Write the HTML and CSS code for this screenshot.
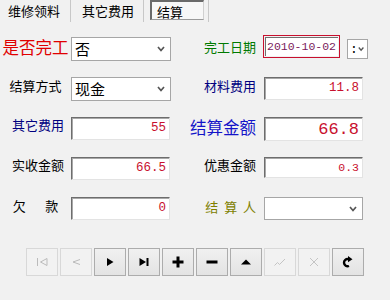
FILE: index.html
```html
<!DOCTYPE html>
<html lang="zh-CN">
<head>
    <meta charset="UTF-8">
    <title>结算</title>
    <link rel="stylesheet" href="styles.css">
</head>
<body>
    <div class="tabs">
        <div class="tab tab-first">维修领料</div>
        <div class="tab tab-second">其它费用</div>
        <div class="tab tab-active"><span class="tab-box">结算</span></div>
    </div>

    <div class="form">
        <!-- 第一行 -->
        <div class="lbl lbl-big red">是否完工</div>
        <div class="combo combo-left"><span class="combo-text">否</span>
            <svg class="chev" width="8" height="6" viewBox="0 0 8 6"><path d="M1 1 L4 4.5 L7 1" fill="none" stroke="#555" stroke-width="1.7"/></svg>
        </div>
        <div class="lbl lbl-right green lbl-low">完工日期</div>
        <div class="date-cell">
            <div class="date-box"><div class="date-inner">2010-10-02</div></div>
            <div class="spin"><span>:</span>
                <svg class="chev" width="8" height="6" viewBox="0 0 8 6"><path d="M1 1 L4 4.5 L7 1" fill="none" stroke="#555" stroke-width="1.7"/></svg>
            </div>
        </div>

        <!-- 第二行 -->
        <div class="lbl lbl-mid">结算方式</div>
        <div class="combo combo-left"><span class="combo-text">现金</span>
            <svg class="chev" width="8" height="6" viewBox="0 0 8 6"><path d="M1 1 L4 4.5 L7 1" fill="none" stroke="#555" stroke-width="1.7"/></svg>
        </div>
        <div class="lbl lbl-right navy lbl-mid">材料费用</div>
        <div class="field">11.8</div>

        <!-- 第三行 -->
        <div class="lbl lbl-shift navy">其它费用</div>
        <div class="field">55</div>
        <div class="lbl lbl-right lbl-big blue">结算金额</div>
        <div class="field field-big">66.8</div>

        <!-- 第四行 -->
        <div class="lbl lbl-shift">实收金额</div>
        <div class="field">66.5</div>
        <div class="lbl lbl-right">优惠金额</div>
        <div class="field field-small">0.3</div>

        <!-- 第五行 -->
        <div class="lbl lbl-spaced">欠&emsp;&ensp;款</div>
        <div class="field">0</div>
        <div class="lbl lbl-right olive lbl-low">结&nbsp;&nbsp;算&nbsp;&nbsp;人</div>
        <div class="combo combo-right">
            <svg class="chev" width="8" height="6" viewBox="0 0 8 6"><path d="M1 1 L4 4.5 L7 1" fill="none" stroke="#555" stroke-width="1.7"/></svg>
        </div>
    </div>

    <div class="toolbar">
        <div class="btn off"><svg width="16" height="16" viewBox="0 0 16 16"><path d="M3.5 4 V12" stroke="#bbb"/><path d="M13 4.5 L6.5 8 L13 11.5 Z" fill="none" stroke="#bbb"/></svg></div>
        <div class="btn off"><svg width="16" height="16" viewBox="0 0 16 16"><path d="M12 5.5 L5 8 L12 10.5" fill="none" stroke="#bbb"/></svg></div>
        <div class="btn"><svg width="16" height="16" viewBox="0 0 16 16"><path d="M5 4 L11.5 8 L5 12 Z" fill="#000"/></svg></div>
        <div class="btn"><svg width="16" height="16" viewBox="0 0 16 16"><path d="M3.5 4 L10 8 L3.5 12 Z" fill="#000"/><rect x="10.5" y="4" width="2" height="8" fill="#000"/></svg></div>
        <div class="btn"><svg width="16" height="16" viewBox="0 0 16 16"><rect x="2.5" y="6.5" width="11" height="3" fill="#000"/><rect x="6.5" y="2.5" width="3" height="11" fill="#000"/></svg></div>
        <div class="btn"><svg width="16" height="16" viewBox="0 0 16 16"><rect x="2.5" y="6.5" width="11" height="3" fill="#000"/></svg></div>
        <div class="btn"><svg width="16" height="16" viewBox="0 0 16 16"><path d="M3 10.5 L13 10.5 L8 5.5 Z" fill="#000"/></svg></div>
        <div class="btn off"><svg width="16" height="16" viewBox="0 0 16 16"><path d="M2.5 11.5 L5.5 8.5 L7.5 10.5 L13 5" fill="none" stroke="#c4c4c4"/></svg></div>
        <div class="btn off"><svg width="16" height="16" viewBox="0 0 16 16"><path d="M4 4 L12 12 M12 4 L4 12" fill="none" stroke="#c4c4c4"/></svg></div>
        <div class="btn"><svg width="16" height="16" viewBox="0 0 16 16"><path d="M9 12 A3.6 3.6 0 1 1 8.5 5.2" fill="none" stroke="#000" stroke-width="2.4"/><path d="M8 2 L12.5 5.3 L8 8.3 Z" fill="#000"/></svg></div>
    </div>
</body>
</html>
```

FILE: styles.css
```css
body {
    margin: 0;
    width: 390px;
    height: 300px;
    overflow: hidden;
    background-color: #f1f1f1;
    font-family: "Noto Sans CJK SC", "Liberation Sans", sans-serif;
    font-size: 13px;
    color: #000;
}

/* Pestañas */
.tabs {
    display: flex;
    height: 22px;
}

.tab {
    box-sizing: border-box;
    height: 22px;
    line-height: 16px;
    padding-top: 3px;
    border-right: 1px solid #c8c8c8;
}

.tab-first {
    width: 71px;
    padding-left: 8px;
}

.tab-second {
    width: 73px;
    padding-left: 11px;
}

.tab-active {
    width: 65px;
    padding: 0 0 0 6px;
}

.tab-box {
    display: block;
    box-sizing: border-box;
    width: 54px;
    height: 20px;
    padding: 2px 0 0 5px;
    line-height: 16px;
    background-color: #f7f7f7;
    border: 1px solid;
    border-width: 2px 1px 1px 2px;
    border-color: #6a6a6a #d0d0d0 #9a9a9a #6a6a6a;
}

/* Formulario */
.form {
    display: grid;
    grid-template-columns: 71px 100px 93px 104px;
    grid-auto-rows: 24px;
    row-gap: 16px;
    padding-top: 15px;
}

.lbl {
    line-height: 16px;
    text-align: center;
    white-space: nowrap;
}

.lbl-shift {
    padding-left: 5px;
}

.lbl-right {
    text-align: right;
    padding-right: 8px;
    padding-left: 0;
}

.lbl-low {
    padding-top: 2px;
}

.lbl-mid {
    padding-top: 1px;
}

.lbl-big {
    font-size: 16.5px;
    line-height: 20px;
}

.lbl-spaced {
    padding-top: 1px;
}

.red { color: #e00000; }
.green { color: #007a00; }
.navy { color: #000080; }
.blue { color: #1414c8; }
.olive { color: #808000; }

.field {
    box-sizing: border-box;
    width: 99px;
    height: 23px;
    padding-right: 3px;
    background-color: #fff;
    border: 1px solid;
    border-color: #6d6d6d #e3e3e3 #e3e3e3 #6d6d6d;
    box-shadow: inset 1px 1px 0 #a8a8a8;
    font-family: "Liberation Mono", monospace;
    font-size: 12.5px;
    line-height: 21px;
    text-align: right;
    color: #c8102e;
}

.field-big {
    height: 24px;
    font-size: 17px;
    line-height: 23px;
}

.field-small {
    height: 21px;
    font-size: 11.5px;
    line-height: 19px;
}

.combo {
    box-sizing: border-box;
    display: flex;
    align-items: center;
    height: 24px;
    background-color: #fff;
    border: 1px solid #a6a6a6;
}

.combo-left {
    width: 100px;
}

.combo-right {
    width: 99px;
    height: 23px;
}

.combo-text {
    flex: 1;
    padding-left: 3px;
    font-size: 15px;
    line-height: 20px;
}

.combo-right::before {
    content: "";
    flex: 1;
}

.chev {
    margin-right: 5px;
}

.date-cell {
    display: flex;
    align-items: flex-start;
    margin-left: -1px;
    margin-top: -2px;
}

.date-box {
    box-sizing: border-box;
    width: 77px;
    height: 23px;
    border: 1px solid #c8102e;
    padding: 1px;
}

.date-inner {
    box-sizing: border-box;
    height: 19px;
    padding-left: 1px;
    background-color: #fff;
    border-top: 1px solid #707070;
    border-left: 1px solid #707070;
    font-family: "Liberation Mono", monospace;
    font-size: 11.5px;
    line-height: 18px;
    color: #7a1a5c;
    white-space: nowrap;
}

.spin {
    box-sizing: border-box;
    display: flex;
    align-items: center;
    justify-content: space-between;
    width: 21px;
    height: 20px;
    margin: 4px 0 0 7px;
    padding-left: 2px;
    background-color: #fff;
    border: 1px solid #a6a6a6;
    font-family: "Liberation Mono", monospace;
    font-size: 13px;
}

.spin .chev {
    margin-right: 3px;
}

/* Barra de navegación */
.toolbar {
    display: flex;
    gap: 2px;
    padding: 27px 0 0 26px;
}

.btn {
    box-sizing: border-box;
    display: flex;
    align-items: center;
    justify-content: center;
    width: 32px;
    height: 28px;
    border: 1px solid #acacac;
    background: linear-gradient(#f0f0f0, #e3e3e3);
}

.btn.off {
    border-color: #d8d8d8;
    background: #f2f2f2;
}
```
